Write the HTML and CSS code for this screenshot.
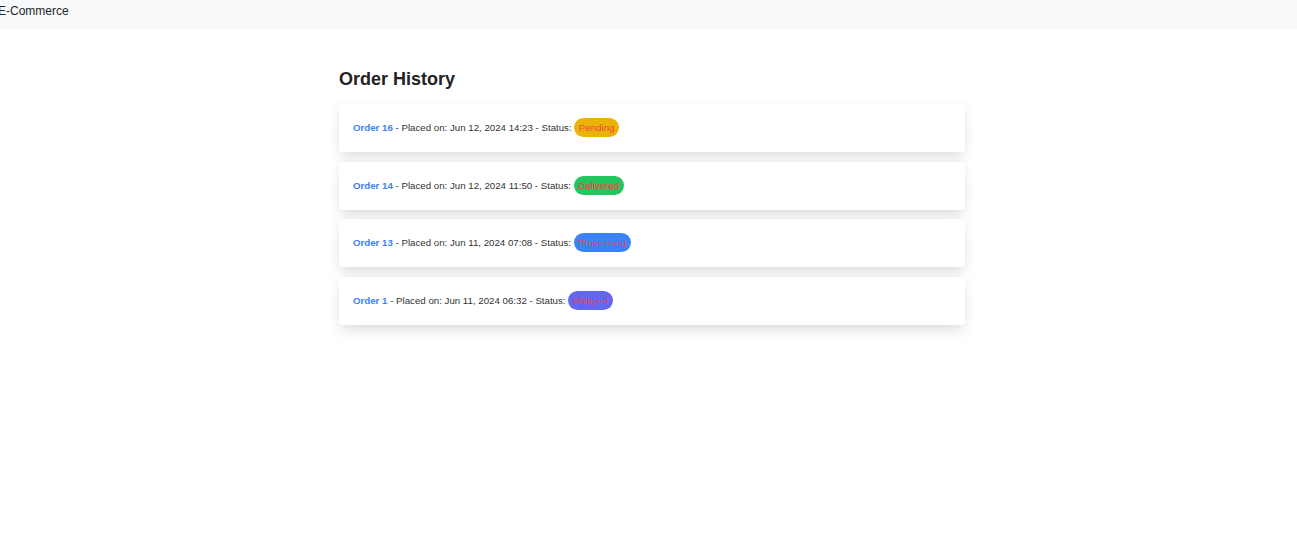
FILE: index.html
```html
<!DOCTYPE html>
<html>
<head>
<meta charset="utf-8">
<link rel="stylesheet" href="styles.css">
</head>
<body>
<header class="topbar"><span class="brand">E-Commerce</span></header>
<main class="container">
  <h1 class="title">Order History</h1>
  <ul class="orders">
    <li class="card"><a class="order-link">Order 16</a> - Placed on: Jun 12, 2024 14:23 - Status: <span class="badge pending">Pending</span></li>
    <li class="card"><a class="order-link">Order 14</a> - Placed on: Jun 12, 2024 11:50 - Status: <span class="badge delivered">Delivered</span></li>
    <li class="card"><a class="order-link">Order 13</a> - Placed on: Jun 11, 2024 07:08 - Status: <span class="badge processing">Processing</span></li>
    <li class="card"><a class="order-link">Order 1</a> - Placed on: Jun 11, 2024 06:32 - Status: <span class="badge shipped">Shipped</span></li>
  </ul>
</main>
</body>
</html>
```
FILE: styles.css
```css
* { box-sizing: border-box; }
html, body { min-height: 100%; }
body {
  margin: 0;
  font-family: "Liberation Sans", Arial, sans-serif;
  color: #222;
  background: #fff;
}
.topbar {
  height: 29px;
  background: #f8f9fa;
  padding-top: 4px;
}
.brand {
  display: block;
  font-size: 12px;
  line-height: 14px;
  margin-left: -2px;
  color: #212529;
}
.container {
  margin: 0 332px 0 339px;
  padding-top: 39px;
  padding-bottom: 60px;
}
.title {
  font-size: 18px;
  font-weight: bold;
  margin: 0 0 14px 0;
  line-height: 22px;
  color: #222;
}
.orders {
  list-style: none;
  margin: 0;
  padding: 0;
  display: flex;
  flex-direction: column;
  gap: 9.67px;
}
.card {
  height: 48px;
  background: #fff;
  border-radius: 3px;
  box-shadow: 0 8px 14px -2px rgba(0, 0, 0, 0.11), 0 0 8px rgba(0, 0, 0, 0.05);
  display: flex;
  align-items: center;
  padding: 0 0 1px 14px;
  font-size: 9.7px;
  white-space: pre;
  color: #333;
}
.order-link {
  color: #3b82f6;
  font-weight: bold;
}
.badge {
  display: inline-flex;
  align-items: center;
  height: 19px;
  padding: 0 4.5px;
  border-radius: 10px;
  color: #ef4444;
}
.pending { background: #eab308; }
.delivered { background: #22c55e; }
.processing { background: #3b82f6; }
.shipped { background: #6366f1; }
```
